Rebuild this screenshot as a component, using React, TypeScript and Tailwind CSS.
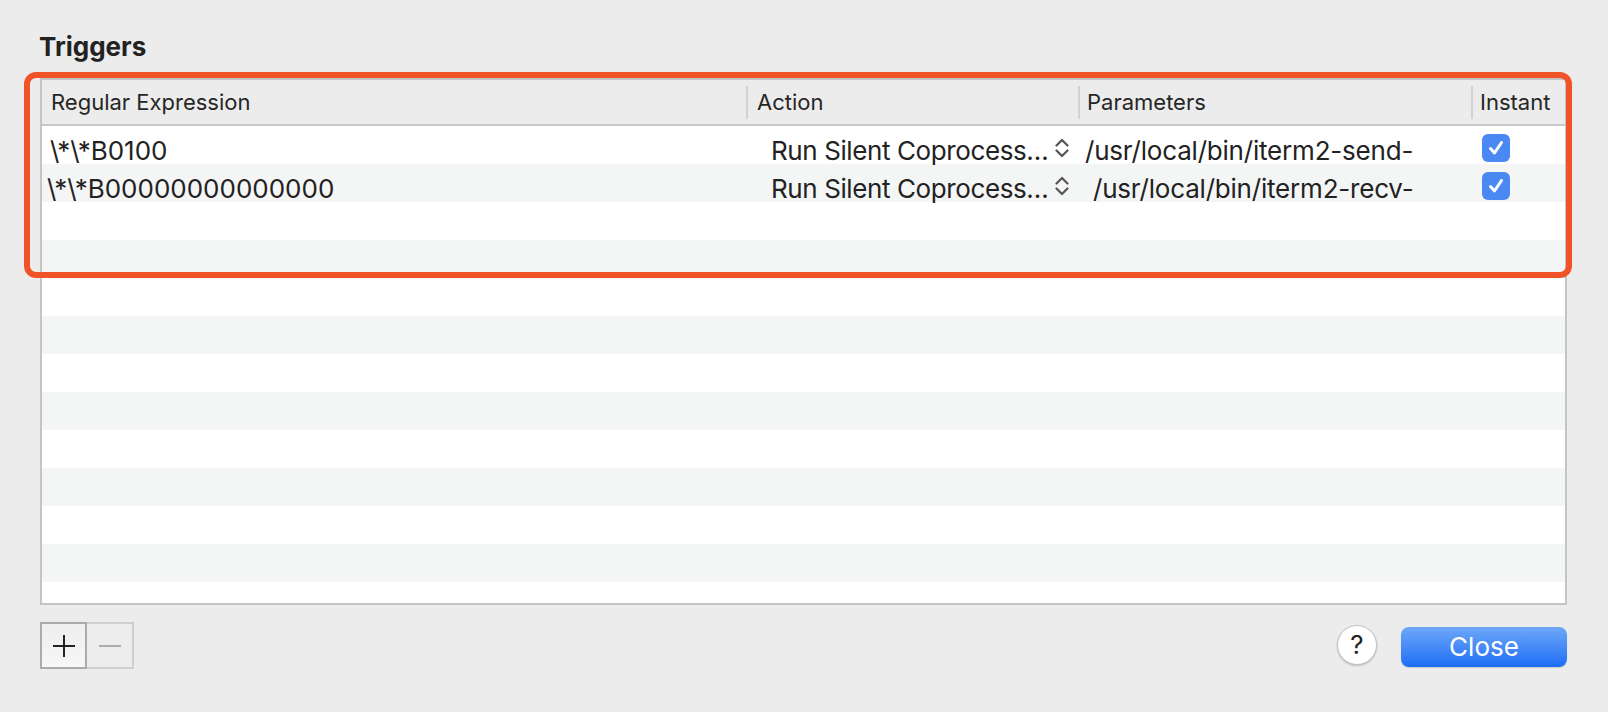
import React from "react"

const font = { fontFamily: "Inter, 'Liberation Sans', sans-serif" }

type Trigger = {
  regex: string
  regexPad: number
  action: string
  params: string
  paramsPad: number
  instant: boolean
}

const triggers: Trigger[] = [
  {
    regex: "\\*\\*B0100",
    regexPad: 8,
    action: "Run Silent Coprocess…",
    params: "/usr/local/bin/iterm2-send-",
    paramsPad: 7,
    instant: true,
  },
  {
    regex: "\\*\\*B00000000000000",
    regexPad: 5,
    action: "Run Silent Coprocess…",
    params: "/usr/local/bin/iterm2-recv-",
    paramsPad: 15,
    instant: true,
  },
]

function UpDown() {
  return (
    <svg width="14" height="20" viewBox="0 0 14 20" fill="none" stroke="#555" strokeWidth="2.2" strokeLinecap="round" strokeLinejoin="round">
      <path d="M1.5 7.5 L7 2 L12.5 7.5" />
      <path d="M1.5 12.5 L7 18 L12.5 12.5" />
    </svg>
  )
}

function Checkbox() {
  return (
    <div className="w-[28px] h-[28px] rounded-[6px] bg-[#4a88f2] flex items-center justify-center">
      <svg width="28" height="28" viewBox="0 0 28 28" fill="none" stroke="white" strokeWidth="3" strokeLinecap="round" strokeLinejoin="round">
        <path d="M8.5 14.5 L12.5 19 L19.5 8.5" />
      </svg>
    </div>
  )
}

function HeaderCell({ label, sep, pad }: { label: string; sep: boolean; pad: string }) {
  return (
    <div className="flex items-center h-full">
      {sep && <span className="w-[2px] h-[33px] bg-[#d2d2d2] shrink-0" />}
      <span className={`${pad} text-[22px] text-[#262626] whitespace-nowrap`}>{label}</span>
    </div>
  )
}

export default function App() {
  const rows = Array.from({ length: 13 }, (_, i) => triggers[i] ?? null)

  return (
    <div className="relative w-[1608px] h-[712px] bg-[#ececec] pl-[40px] pr-[41px] pt-[34px] overflow-hidden" style={font}>
      {/* Title */}
      <h1 className="text-[26px] leading-[26px] font-bold text-[#222] -ml-[1px]">Triggers</h1>

      {/* Table */}
      <div className="mt-[18px] border-2 border-[#c4c4c4] bg-white">
        <div className="grid grid-cols-[704px_332px_393px_1fr] h-[46px] bg-[#ececec] border-b-2 border-[#c8c8c8]">
          <HeaderCell label="Regular Expression" sep={false} pad="pl-[9px]" />
          <HeaderCell label="Action" sep pad="pl-[9px]" />
          <HeaderCell label="Parameters" sep pad="pl-[7px]" />
          <HeaderCell label="Instant" sep pad="pl-[7px]" />
        </div>
        <div className="h-[477px] overflow-hidden">
          {rows.map((t, i) => (
            <div
              key={i}
              className={`grid grid-cols-[704px_332px_393px_1fr] h-[38px] text-[26px] text-[#222] ${
                i % 2 === 1 ? "bg-[#f4f5f5]" : "bg-white"
              }`}
            >
              {t && (
                <>
                  <div className="flex items-center pt-[5px] whitespace-nowrap" style={{ paddingLeft: t.regexPad }}>
                    {t.regex}
                  </div>
                  <div className="flex items-center pl-[25px] pr-[9px]">
                    <span className="pt-[5px] whitespace-nowrap tracking-[-0.4px]">{t.action}</span>
                    <span className="ml-auto shrink-0">
                      <UpDown />
                    </span>
                  </div>
                  <div
                    className="flex items-center pt-[5px] whitespace-nowrap tracking-[-0.2px]"
                    style={{ paddingLeft: t.paramsPad }}
                  >
                    {t.params}
                  </div>
                  <div className="flex items-center pl-[11px]">{t.instant && <Checkbox />}</div>
                </>
              )}
            </div>
          ))}
        </div>
      </div>

      {/* Bottom bar */}
      <div className="mt-[17px] flex items-start justify-between">
        <div className="flex">
          <button className="w-[47px] h-[47px] border-2 border-[#ababab] bg-gradient-to-b from-[#eeeeee] to-[#f7f7f7] flex items-center justify-center">
            <svg width="22" height="22" viewBox="0 0 22 22" stroke="#222" strokeWidth="2">
              <path d="M11 0 V22 M0 11 H22" />
            </svg>
          </button>
          <button className="w-[47px] h-[47px] border-2 border-l-0 border-[#cfcfcf] bg-[#ededed] flex items-center justify-center">
            <svg width="22" height="22" viewBox="0 0 22 22" stroke="#ababab" strokeWidth="2">
              <path d="M0 11 H22" />
            </svg>
          </button>
        </div>
        <div className="flex items-start gap-[24px]">
          <button className="mt-[3px] w-[40px] h-[40px] rounded-full bg-white border border-[#c2c2c2] shadow-[0_1px_2px_rgba(0,0,0,0.2)] text-[26px] leading-none text-[#222] flex items-center justify-center">
            ?
          </button>
          <button className="mt-[5px] w-[166px] h-[40px] rounded-[8px] bg-gradient-to-b from-[#6ea7f8] to-[#1a6cf5] text-white text-[26px] leading-none flex items-center justify-center shadow-[0_1px_1px_rgba(0,0,0,0.15)]">
            Close
          </button>
        </div>
      </div>

      {/* Highlight annotation */}
      <div className="absolute left-[24px] top-[72px] w-[1548px] h-[206px] border-[6px] border-[#ef5327] rounded-[12px] pointer-events-none" />
    </div>
  )
}
